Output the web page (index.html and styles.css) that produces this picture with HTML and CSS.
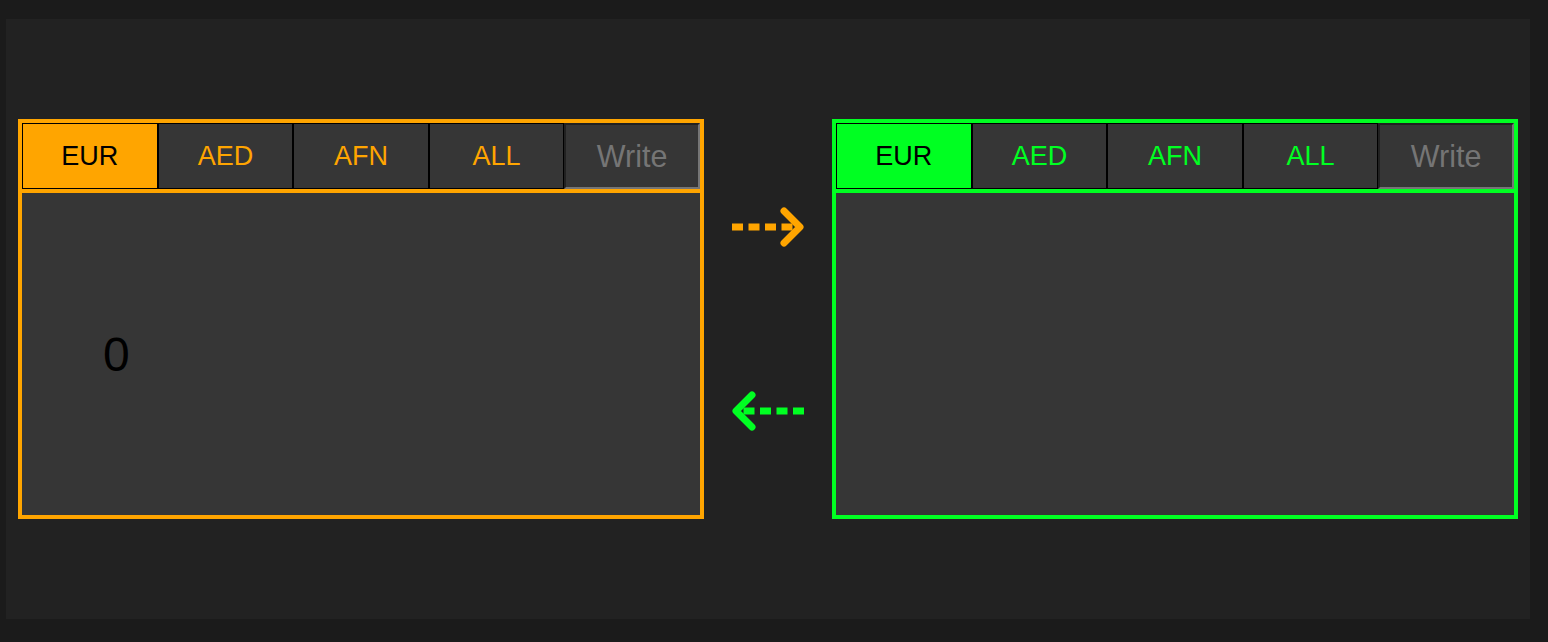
FILE: index.html
```html
<!DOCTYPE html>
<html>
<head>
<meta charset="utf-8">
<link rel="stylesheet" href="styles.css">
</head>
<body>
<div class="stage">
  <div class="panel panel-orange">
    <div class="tabs">
      <div class="tab tab-active">EUR</div>
      <div class="tab">AED</div>
      <div class="tab">AFN</div>
      <div class="tab">ALL</div>
      <input class="tab-input" type="text" placeholder="Write">
    </div>
    <div class="content"><span class="value">0</span></div>
  </div>
  <div class="arrows">
    <svg class="arrow arrow-right" width="74" height="40" viewBox="0 0 74 40">
      <line x1="1" y1="20" x2="70" y2="20" stroke-dasharray="11 5.5" />
      <polyline points="53,4 69,20 53,36" fill="none" />
    </svg>
    <svg class="arrow arrow-left" width="74" height="40" viewBox="0 0 74 40">
      <line x1="73" y1="20" x2="4" y2="20" stroke-dasharray="11 5.5" />
      <polyline points="21,4 5,20 21,36" fill="none" />
    </svg>
  </div>
  <div class="panel panel-green">
    <div class="tabs">
      <div class="tab tab-active">EUR</div>
      <div class="tab">AED</div>
      <div class="tab">AFN</div>
      <div class="tab">ALL</div>
      <input class="tab-input" type="text" placeholder="Write">
    </div>
    <div class="content"></div>
  </div>
</div>
</body>
</html>
```
FILE: styles.css
```css
html, body {
  margin: 0;
  padding: 0;
  background: #1b1b1b;
  font-family: "Liberation Sans", Arial, sans-serif;
}

.stage {
  margin: 19px 0 0 6px;
  width: 1524px;
  height: 600px;
  background: #222222;
  display: flex;
  align-items: center;
  justify-content: center;
}

.panel {
  box-sizing: border-box;
  width: 686px;
  height: 400px;
  border: 4px solid;
  display: flex;
  flex-direction: column;
  gap: 4px;
}

.panel-orange { border-color: #ffa500; background: #ffa500; color: #ffa500; }
.panel-green { border-color: #00ff22; background: #00ff22; color: #00ff22; }

.tabs {
  display: flex;
  height: 66px;
}

.tab {
  box-sizing: border-box;
  flex: none;
  width: 20%;
  height: 66px;
  border: 1px solid #000;
  background: #363636;
  display: flex;
  align-items: center;
  justify-content: center;
  font-size: 27px;
}

.panel-orange .tab-active { background: #ffa500; color: #000; }
.panel-green .tab-active { background: #00ff22; color: #000; }

.tab-input {
  box-sizing: border-box;
  flex: none;
  width: 20%;
  height: 66px;
  margin: 0;
  padding: 0;
  border: 2px inset #767676;
  background: #363636;
  font-family: "Liberation Sans", Arial, sans-serif;
  font-size: 30.5px;
  text-align: center;
  color: #fff;
  outline: none;
}

.tab-input::placeholder { color: #757575; }

.content {
  flex: 1;
  background: #363636;
  display: flex;
  align-items: center;
  padding-left: 81px;
}

.value {
  font-size: 48px;
  color: #000;
}

.arrows {
  width: 128px;
  display: flex;
  flex-direction: column;
  align-items: center;
  gap: 144px;
}

.arrow line, .arrow polyline {
  stroke-width: 7;
}

.arrow polyline {
  stroke-linecap: round;
  stroke-linejoin: round;
}

.arrow-right { stroke: #ffa500; }
.arrow-left { stroke: #00ff22; }
```
